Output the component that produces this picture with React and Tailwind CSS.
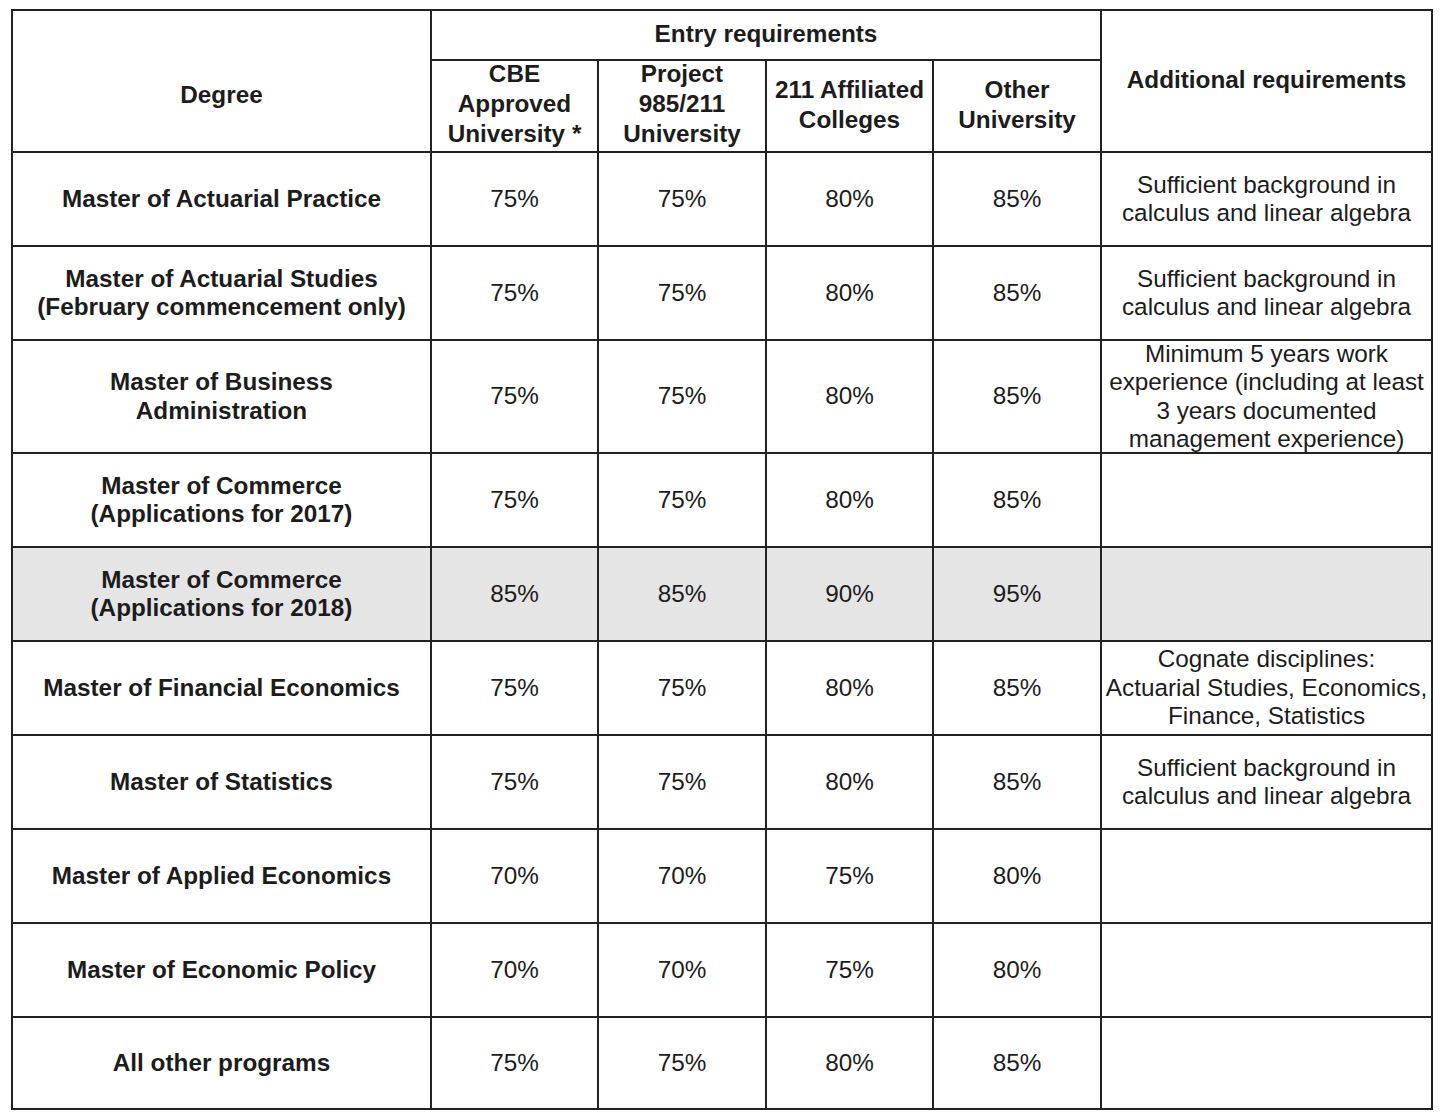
import React from "react";

const rows = [
  { degree: ["Master of Actuarial Practice"], v: ["75%", "75%", "80%", "85%"], extra: ["Sufficient background in", "calculus and linear algebra"] },
  { degree: ["Master of Actuarial Studies", "(February commencement only)"], v: ["75%", "75%", "80%", "85%"], extra: ["Sufficient background in", "calculus and linear algebra"] },
  { degree: ["Master of Business", "Administration"], v: ["75%", "75%", "80%", "85%"], extra: ["Minimum 5 years work", "experience (including at least", "3 years documented", "management experience)"] },
  { degree: ["Master of Commerce", "(Applications for 2017)"], v: ["75%", "75%", "80%", "85%"], extra: [] },
  { degree: ["Master of Commerce", "(Applications for 2018)"], v: ["85%", "85%", "90%", "95%"], extra: [], grey: true },
  { degree: ["Master of Financial Economics"], v: ["75%", "75%", "80%", "85%"], extra: ["Cognate disciplines:", "Actuarial Studies, Economics,", "Finance, Statistics"] },
  { degree: ["Master of Statistics"], v: ["75%", "75%", "80%", "85%"], extra: ["Sufficient background in", "calculus and linear algebra"] },
  { degree: ["Master of Applied Economics"], v: ["70%", "70%", "75%", "80%"], extra: [] },
  { degree: ["Master of Economic Policy"], v: ["70%", "70%", "75%", "80%"], extra: [] },
  { degree: ["All other programs"], v: ["75%", "75%", "80%", "85%"], extra: [] },
];

function Cell({ lines, bold, grey, className = "" }) {
  return (
    <div
      className={`flex flex-col items-center justify-center text-center ${grey ? "bg-[#e6e5e6]" : "bg-white"} ${bold ? "font-bold" : ""} ${className}`}
    >
      {lines.map((l, i) => (
        <div key={i} className="whitespace-nowrap">
          {l}
        </div>
      ))}
    </div>
  );
}

export default function App() {
  return (
    <div className="min-h-[1120px] bg-white pt-[9px] pl-[11px] text-[#1c1c1c] font-['Liberation_Sans',Arial,sans-serif] text-[24.3px] leading-[28.5px]">
      <div className="inline-grid grid-cols-[417px_165px_166px_165px_166px_329px] grid-rows-[48px_90px_92px_92px_111px_92px_92px_92px_92px_92px_92px_90px] gap-[2px] p-[2px] bg-[#222]">
        {/* header */}
        <Cell lines={["Degree"]} bold className="row-span-2 pt-[28px]" />
        <Cell lines={["Entry requirements"]} bold className="col-span-4 pb-[2px]" />
        <Cell lines={["Additional requirements"]} bold className="row-span-2 pb-[2px]" />
        <Cell lines={["CBE", "Approved", "University *"]} bold className="leading-[30px] pb-[4px]" />
        <Cell lines={["Project", "985/211", "University"]} bold className="leading-[30px] pb-[4px]" />
        <Cell lines={["211 Affiliated", "Colleges"]} bold className="leading-[30px] pb-[3px]" />
        <Cell lines={["Other", "University"]} bold className="leading-[30px] pb-[3px]" />

        {rows.map((r, i) => (
          <React.Fragment key={i}>
            <Cell lines={r.degree} bold grey={r.grey} />
            {r.v.map((v, j) => (
              <Cell key={j} lines={[v]} grey={r.grey} />
            ))}
            <Cell lines={r.extra} grey={r.grey} />
          </React.Fragment>
        ))}
      </div>
    </div>
  );
}
